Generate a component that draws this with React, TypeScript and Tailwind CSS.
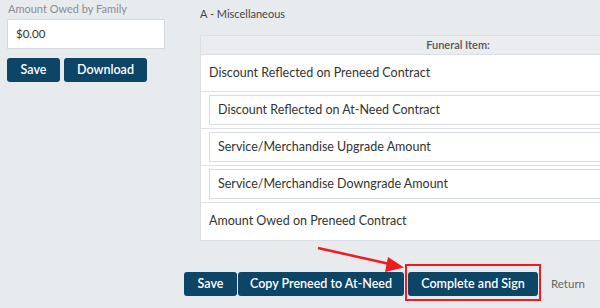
import React from 'react';

const btn =
  'h-[24px] rounded-[3px] bg-[#0c4566] text-white text-[12.5px] font-semibold flex items-center justify-center leading-none';

function NestedRow({ label }: { label: string }) {
  return (
    <div className="border-b border-[#dfe2e5] pl-2 pt-[3px] pb-[3px]">
      <div className="h-[30px] border border-[#d9dce0] bg-white flex items-center pl-2 text-[12.5px] text-[#333]">
        {label}
      </div>
    </div>
  );
}

export default function App() {
  return (
    <div
      className="w-[600px] h-[308px] overflow-hidden bg-[#e8ebee] flex relative"
      style={{ fontFamily: 'Lato, "Open Sans", sans-serif' }}
    >
      {/* left column */}
      <div className="w-[184px] shrink-0 pl-[7px]">
        <div className="text-[11px] text-[#8a8d91] mt-[1px] pl-[1px] h-[18px]">Amount Owed by Family</div>
        <div className="w-[158px] h-[30px] bg-white border border-[#d5d8dc] flex items-center pl-2 text-[11.5px] text-[#333]">
          $0.00
        </div>
        <div className="flex gap-[4px] mt-[9px]">
          <button className={`${btn} w-[53px] h-[23px]`}>Save</button>
          <button className={`${btn} w-[83px] h-[23px]`}>Download</button>
        </div>
      </div>

      {/* right column */}
      <div className="flex-1 min-w-0">
        <div className="pl-4 pt-[6px] text-[11px] text-[#444] h-[35px]">A - Miscellaneous</div>
        <div className="ml-4 w-[516px] bg-white border border-[#dcdfe2]">
          <div className="h-[19px] bg-[#eaecef] border-b border-[#dcdfe2] flex items-center justify-center text-[11px] font-semibold text-[#555]">
            Funeral Item:
          </div>
          <div className="h-[37px] border-b border-[#dfe2e5] flex items-center pl-2 text-[12.5px] text-[#333]">
            Discount Reflected on Preneed Contract
          </div>
          <NestedRow label="Discount Reflected on At-Need Contract" />
          <NestedRow label="Service/Merchandise Upgrade Amount" />
          <NestedRow label="Service/Merchandise Downgrade Amount" />
          <div className="h-[37px] flex items-center pl-2 text-[12.5px] text-[#333]">
            Amount Owed on Preneed Contract
          </div>
        </div>

        <div className="flex items-center mt-[31px]">
          <button className={`${btn} w-[53px]`}>Save</button>
          <button className={`${btn} w-[166px] ml-[1px]`}>Copy Preneed to At-Need</button>
          <div className="relative ml-[4px]">
            <button className={`${btn} w-[130px]`}>Complete and Sign</button>
            <div className="absolute left-[-3px] right-[-3px] top-[-8px] bottom-[-5px] border-2 border-[#ee1c1c]" />
          </div>
          <span className="ml-[13px] text-[11.5px] text-[#666]">Return</span>
        </div>
      </div>

      {/* annotation arrow */}
      <svg className="absolute left-0 top-0 pointer-events-none" width="600" height="308">
        <line x1="318" y1="248" x2="392" y2="264.5" stroke="#ee1c1c" strokeWidth="2.5" />
        <polygon points="404,267.5 388,257 385,272" fill="#ee1c1c" />
      </svg>
    </div>
  );
}
